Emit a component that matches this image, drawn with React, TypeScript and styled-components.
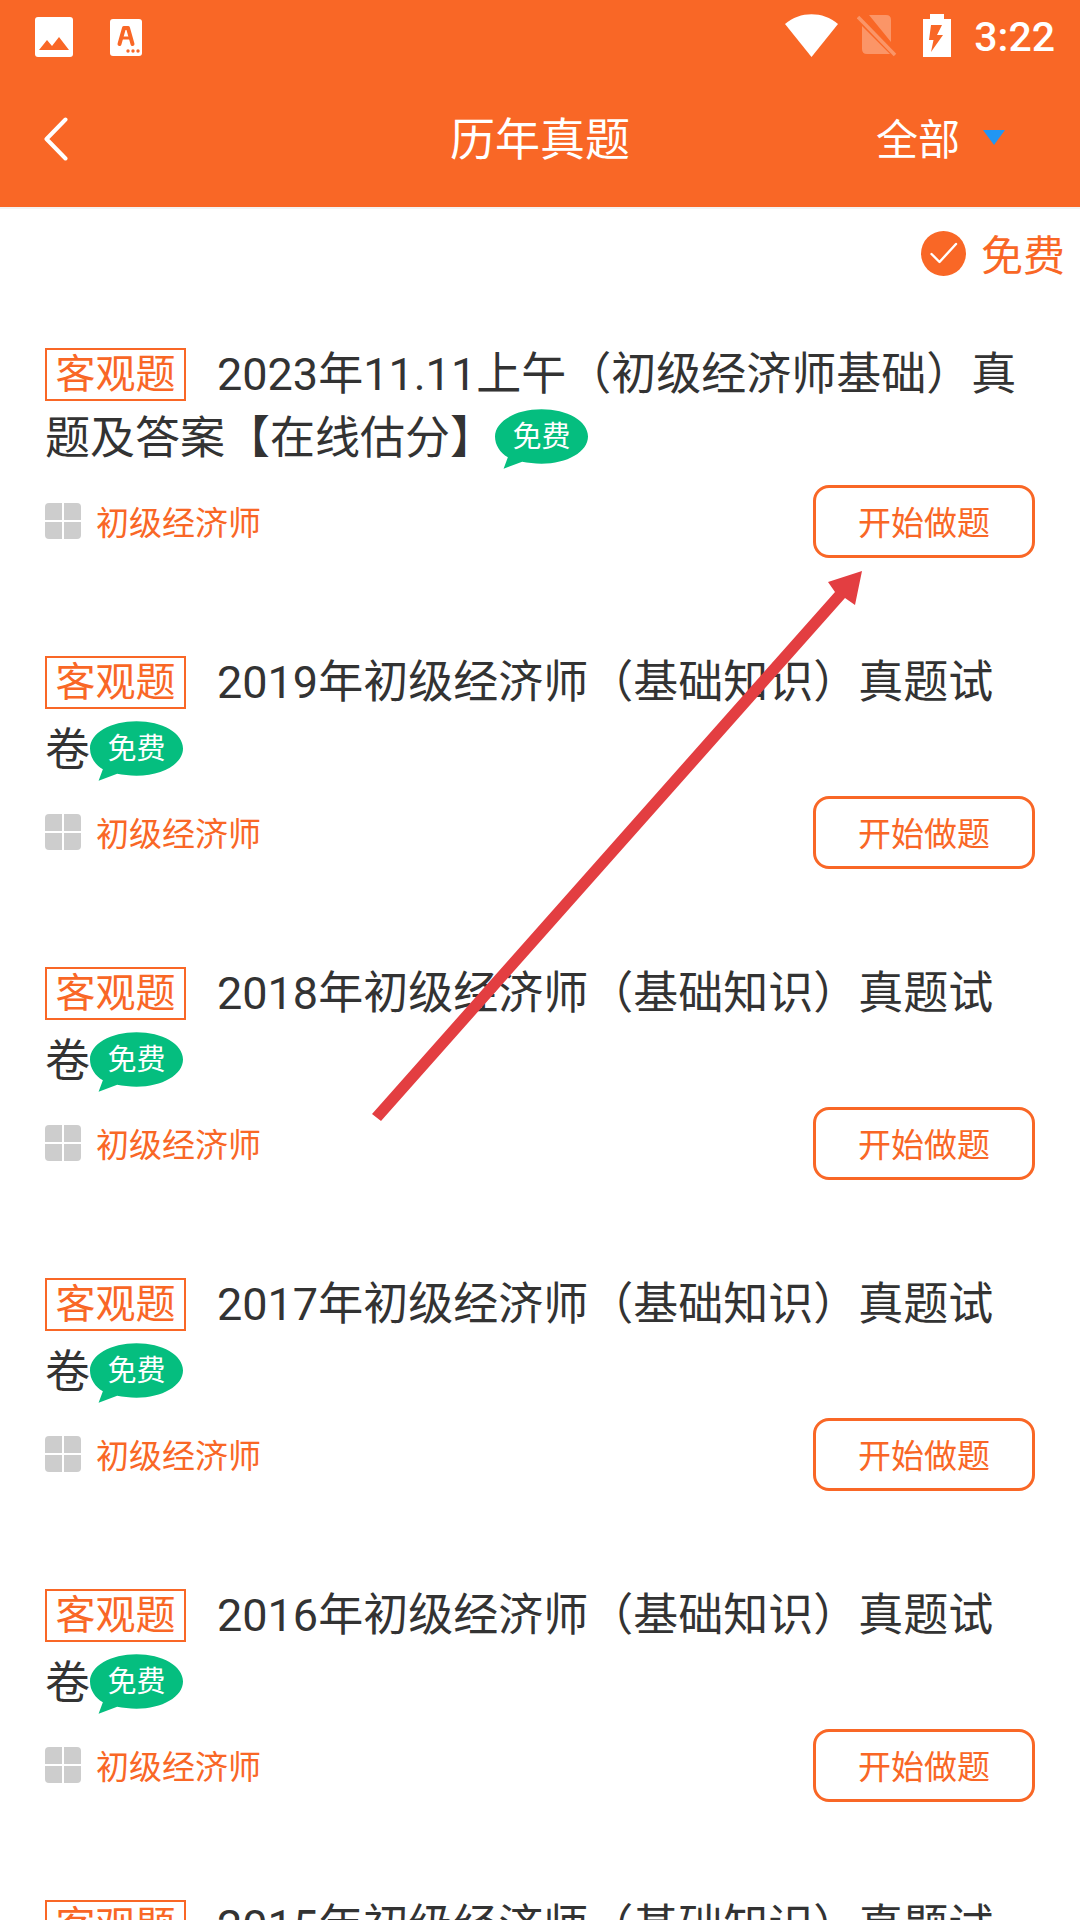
import React from 'react'
import styled, { createGlobalStyle } from 'styled-components'

const ORANGE = '#f96726'

const GlobalStyle = createGlobalStyle`
  html, body {
    margin: 0;
    padding: 0;
    height: 1920px;
    overflow: hidden;
    background: #fff;
  }
  * {
    box-sizing: border-box;
  }
`

const Page = styled.div`
  position: relative;
  width: 1080px;
  height: 1920px;
  overflow: hidden;
  background: #fff;
  font-family: Roboto, 'Noto Sans CJK SC', sans-serif;
`

const Header = styled.header`
  height: 209px;
  background: ${ORANGE};
  border-bottom: 2px solid #f3f3f3;
  color: #fff;
`

const StatusBar = styled.div`
  height: 74px;
  display: flex;
  align-items: center;
  padding: 0 25px 0 35px;
`

const StatusLeft = styled.div`
  display: flex;
  align-items: center;
  gap: 37px;
  flex: 1;
`

const StatusRight = styled.div`
  display: flex;
  align-items: center;
`

const StatusIcon = styled.svg<{ $left?: number }>`
  margin: -3px 0 0 ${p => p.$left || 0}px;
`

const Clock = styled.span`
  font-size: 41px;
  font-weight: 500;
  margin-left: 23px;
`

const NavBar = styled.div`
  height: 133px;
  display: grid;
  grid-template-columns: 1fr auto 1fr;
  align-items: center;
  padding: 0 45px;
`

const BackIcon = styled.svg`
  margin: -4px 0 0 -1px;
`

const NavTitle = styled.h1`
  margin: 0;
  font-size: 45px;
  font-weight: 400;
  line-height: 1;
`

const NavFilter = styled.div`
  justify-self: end;
  display: flex;
  align-items: center;
  gap: 23px;
  margin: -8px 30px 0 0;
  font-size: 42px;
`

const Caret = styled.i`
  width: 0;
  height: 0;
  border-left: 11px solid transparent;
  border-right: 11px solid transparent;
  border-top: 15px solid #2196f3;
  margin-top: 1px;
`

const FilterRow = styled.div`
  height: 134px;
  padding: 22px 15px 0 0;
  display: flex;
  justify-content: flex-end;
  align-items: flex-start;
  gap: 15px;
  color: ${ORANGE};
  font-size: 42px;
  line-height: 52px;
`

const List = styled.div`
  padding: 0 45px;
`

const Item = styled.article`
  margin-bottom: 91px;
`

const Title = styled.div<{ $leading: number }>`
  height: ${p => p.$leading * 2}px;
  font-size: 45px;
  line-height: ${p => p.$leading}px;
  color: #333;
`

const Tag = styled.span`
  display: inline-block;
  width: 141px;
  height: 53px;
  margin-right: 31px;
  border: 2px solid ${ORANGE};
  color: ${ORANGE};
  font-size: 40px;
  line-height: 49px;
  text-align: center;
  vertical-align: 2px;
`

const Bubble = styled.span`
  position: relative;
  display: inline-block;
  width: 93px;
  height: 60px;
  vertical-align: 7px;
  color: #fff;
  font-size: 29px;
  line-height: 57px;
  text-align: center;
`

const BubbleShape = styled.svg`
  position: absolute;
  left: 0;
  top: 0;
`

const BubbleText = styled.span`
  position: relative;
`

const MetaRow = styled.div<{ $gap: number }>`
  margin-top: ${p => p.$gap}px;
  display: flex;
  align-items: center;
  height: 73px;
`

const Category = styled.span`
  flex: 1;
  display: flex;
  align-items: center;
  gap: 15px;
  color: ${ORANGE};
  font-size: 33px;
  margin-top: -1px;
`

const GridIcon = styled.span`
  display: grid;
  grid-template-columns: 17px 17px;
  grid-auto-rows: 17px;
  gap: 2px;
  border-radius: 4px;
  overflow: hidden;
`

const Cell = styled.i`
  background: #cdcdcd;
`

const StartButton = styled.button`
  width: 222px;
  height: 73px;
  padding: 0 0 2px;
  background: #fff;
  border: 3px solid ${ORANGE};
  border-radius: 16px;
  color: ${ORANGE};
  font-family: inherit;
  font-size: 33px;
`

const ArrowLayer = styled.svg`
  position: absolute;
  left: 0;
  top: 0;
  pointer-events: none;
`

const items = [
  { text: '2023年11.11上午（初级经济师基础）真题及答案【在线估分】', leading: 64, gap: 14 },
  { text: '2019年初级经济师（基础知识）真题试卷', leading: 68, gap: 11 },
  { text: '2018年初级经济师（基础知识）真题试卷', leading: 68, gap: 11 },
  { text: '2017年初级经济师（基础知识）真题试卷', leading: 68, gap: 11 },
  { text: '2016年初级经济师（基础知识）真题试卷', leading: 68, gap: 11 },
  { text: '2015年初级经济师（基础知识）真题试卷', leading: 68, gap: 11 },
]

export default function App() {
  return (
    <Page>
      <GlobalStyle />
      <Header>
        <StatusBar>
          <StatusLeft>
            <svg width="38" height="40" viewBox="0 0 38 40">
              <rect width="38" height="40" rx="3" fill="#fff" />
              <path d="M4 33 L12 23 L17 29 L24 20 L34 33 Z" fill={ORANGE} />
            </svg>
            <svg width="32" height="37" viewBox="0 0 32 37">
              <rect width="32" height="37" rx="3" fill="#fff" />
              <path d="M9.5 25 L14 9 H18 L22.5 25" fill="none" stroke={ORANGE} strokeWidth="4" strokeLinecap="round" strokeLinejoin="round" />
              <path d="M12 19 H20" stroke={ORANGE} strokeWidth="3" />
              <circle cx="18" cy="32" r="1.7" fill={ORANGE} />
              <circle cx="23" cy="32" r="1.7" fill={ORANGE} />
              <circle cx="28" cy="32" r="1.7" fill={ORANGE} />
            </svg>
          </StatusLeft>
          <StatusRight>
            <StatusIcon width="53" height="43" viewBox="0 0 53 43">
              <path d="M0 10 C15 -3 38 -3 53 10 L26.5 43 Z" fill="#fff" />
            </StatusIcon>
            <StatusIcon $left={19} width="40" height="42" viewBox="0 0 40 42">
              <path d="M12 0 H29 Q34 0 34 5 V27 Z M5 11 L33 39 H10 Q5 39 5 34 Z" fill="#fff" opacity="0.3" />
              <path d="M1 2 L38 40" stroke="#fff" strokeWidth="3.5" opacity="0.3" />
            </StatusIcon>
            <StatusIcon $left={26} width="28" height="43" viewBox="0 0 28 43">
              <path d="M0 5 H7 V0 H21 V5 H28 V43 H0 Z M8 11 L6 26 H10.5 L8 38 L20 21 H14 L19 11 Z" fill="#fff" fillRule="evenodd" />
            </StatusIcon>
            <Clock>3:22</Clock>
          </StatusRight>
        </StatusBar>
        <NavBar>
          <BackIcon width="24" height="44" viewBox="0 0 24 44">
            <path d="M21.5 2.5 L2.5 22 L21.5 41.5" fill="none" stroke="#fff" strokeWidth="4" strokeLinecap="round" strokeLinejoin="round" />
          </BackIcon>
          <NavTitle>历年真题</NavTitle>
          <NavFilter>
            全部
            <Caret />
          </NavFilter>
        </NavBar>
      </Header>
      <FilterRow>
        <svg width="45" height="45" viewBox="0 0 45 45">
          <circle cx="22.5" cy="22.5" r="22.5" fill={ORANGE} />
          <path d="M10.5 23 L18.5 31 L35 13" fill="none" stroke="#fff" strokeWidth="2.4" strokeLinecap="round" strokeLinejoin="round" />
        </svg>
        免费
      </FilterRow>
      <List>
        {items.map(item => (
          <Item key={item.text}>
            <Title $leading={item.leading}>
              <Tag>客观题</Tag>
              {item.text}
              <Bubble>
                <BubbleShape width="93" height="60" viewBox="0 0 94 60">
                  <path d="M47 0 C73 0 94 12 94 27.5 C94 43 73 55 47 55 C40 55 33 54 27.5 53 L8.7 60 L13 48.5 C5 44 0 36 0 27.5 C0 12 21 0 47 0 Z" fill="#05be7f" />
                </BubbleShape>
                <BubbleText>免费</BubbleText>
              </Bubble>
            </Title>
            <MetaRow $gap={item.gap}>
              <Category>
                <GridIcon>
                  <Cell />
                  <Cell />
                  <Cell />
                  <Cell />
                </GridIcon>
                初级经济师
              </Category>
              <StartButton>开始做题</StartButton>
            </MetaRow>
          </Item>
        ))}
      </List>
      <ArrowLayer width="1080" height="1920" viewBox="0 0 1080 1920">
        <path d="M372 1114 L835 592 L828 582 L862 571 L855 605 L845 598 L381 1121 Z" fill="#e33e41" />
      </ArrowLayer>
    </Page>
  )
}
